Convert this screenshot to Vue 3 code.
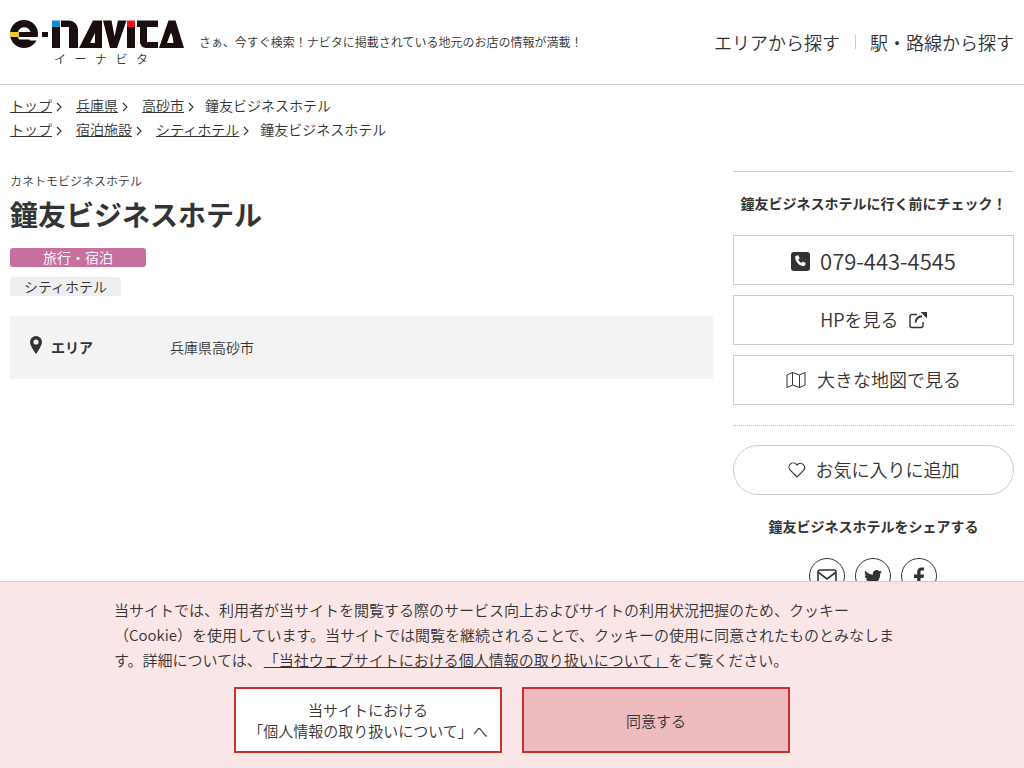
<script setup>
const crumbs = [
  { links: ['トップ', '兵庫県', '高砂市'], current: '鐘友ビジネスホテル' },
  { links: ['トップ', '宿泊施設', 'シティホテル'], current: '鐘友ビジネスホテル' }
]
</script>

<template>
  <div class="page">
    <header class="header">
      <div class="brand">
        <div class="logo">
          <svg class="logo-mark" width="176" height="30" viewBox="10 20 176 30">
            <g fill="#1a0d0d">
              <circle cx="24" cy="34" r="14"/>
              <rect x="42" y="32" width="6" height="5"/>
              <rect x="52" y="27" width="8" height="21"/>
              <path d="M61 20.500h8a9 9 0 0 1 9 9V48h-9V27h-8z"/>
              <path d="M79 48l14-27.500h9V48zM90 43h5V33z" fill-rule="evenodd"/>
              <path d="M103 20.500h8.500l3 16 3.500-16h8.500L117 48h-7z"/>
              <rect x="127" y="27" width="8" height="21"/>
              <path d="M137 20.500h21V27h-11v15h11v6h-12a6 6 0 0 1-6-6V27h-3z"/>
              <path d="M159 48l9.500-27.500h7L184 48zM167 43h6.500l-1-6.500-1.500-4z" fill-rule="evenodd"/>
            </g>
            <path d="M18 32a6.500 6.500 0 0 1 12.500 0z" fill="#fff"/>
            <path d="M18 37h21v3.500H30l-.5-1H19z" fill="#fff"/>
            <rect x="10" y="32" width="9" height="5" fill="#eec830"/>
            <rect x="52" y="20.500" width="8" height="6.500" fill="#0c90d0"/>
            <rect x="127" y="20.500" width="8" height="6.500" fill="#e8101f"/>
          </svg>
          <span class="logo-kana">イーナビタ</span>
        </div>
        <p class="tagline">さぁ、今すぐ検索！ナビタに掲載されている地元のお店の情報が満載！</p>
      </div>
      <nav class="gnav">
        <a class="gnav-item">エリアから探す</a>
        <span class="gnav-sep"></span>
        <a class="gnav-item">駅・路線から探す</a>
      </nav>
    </header>

    <div class="crumbs">
      <ol v-for="(row, i) in crumbs" :key="i" class="crumb-row">
        <li v-for="link in row.links" :key="link" class="crumb">
          <a class="crumb-link">{{ link }}</a>
          <svg class="chev" width="6" height="10" viewBox="0 0 6 10"><path d="M1 1l4 4-4 4" fill="none" stroke="#333" stroke-width="1.1"/></svg>
        </li>
        <li class="crumb-current">{{ row.current }}</li>
      </ol>
    </div>

    <div class="columns">
      <main class="main">
        <p class="kana">カネトモビジネスホテル</p>
        <h1 class="title">鐘友ビジネスホテル</h1>
        <div class="tag tag-cat">旅行・宿泊</div>
        <div class="tag tag-sub">シティホテル</div>
        <dl class="info">
          <dt class="info-label">
            <svg width="12" height="18" viewBox="0 0 12 18"><path d="M6 0a6 6 0 0 0-6 6c0 4 6 12 6 12s6-8 6-12a6 6 0 0 0-6-6zm0 8.600a2.600 2.600 0 1 1 0-5.200 2.600 2.600 0 0 1 0 5.200z" fill="#333" fill-rule="evenodd"/></svg>
            <span>エリア</span>
          </dt>
          <dd class="info-value">兵庫県高砂市</dd>
        </dl>
      </main>

      <aside class="side">
        <h2 class="side-head">鐘友ビジネスホテルに行く前にチェック！</h2>
        <a class="btn btn-tel">
          <svg width="19" height="19" viewBox="0 0 19 19"><rect width="19" height="19" rx="3" fill="#333"/><path d="M5 3.800l2.400-.6 1.300 3.200-1.500 1.200a8 8 0 0 0 3.200 3.400l1.300-1.500 3 1.400-.6 2.400c-.2.500-.6.800-1.200.8C8 14.100 4.100 9.500 4.200 5c0-.6.300-1 .8-1.200z" fill="#fff"/></svg>
          <span>079-443-4545</span>
        </a>
        <a class="btn btn-label">
          <span>HPを見る</span>
          <svg class="ico-ext" width="18" height="18" viewBox="0 0 18 18"><path d="M8 3.500H3A2 2 0 0 0 1 5.500v9a2 2 0 0 0 2 2h9a2 2 0 0 0 2-2V11" fill="none" stroke="#333" stroke-width="1.400"/><path d="M6.500 11.500C7 7.500 9.500 5.500 13 5.300" fill="none" stroke="#333" stroke-width="2"/><path d="M11.500 1H18v6.500z" fill="#333"/></svg>
        </a>
        <a class="btn btn-label btn-wide">
          <svg width="20" height="18" viewBox="0 0 20 18"><path d="M1 4l5.500-2.500L13.500 4 19 1.500V14l-5.500 2.500L6.500 14 1 16.500zM6.500 1.500V14M13.500 4v12.500" fill="none" stroke="#333" stroke-width="1" stroke-linejoin="round"/></svg>
          <span>大きな地図で見る</span>
        </a>
        <div class="dots"></div>
        <a class="btn btn-label btn-pill">
          <svg width="18" height="16" viewBox="0 0 18 16"><path d="M9 15L2.200 8.200a4.300 4.300 0 0 1 0-6 4.300 4.300 0 0 1 6 0l.8.800.8-.8a4.300 4.300 0 0 1 6 6z" fill="none" stroke="#333" stroke-width="1.100" stroke-linejoin="round"/></svg>
          <span>お気に入りに追加</span>
        </a>
        <h2 class="share-head">鐘友ビジネスホテルをシェアする</h2>
        <div class="share">
          <span class="circle">
            <svg width="20" height="16" viewBox="0 0 20 16"><rect x="1" y="1" width="18" height="14" rx="2" fill="none" stroke="#333" stroke-width="1.600"/><path d="M1.500 3.500L10 10l8.500-6.500" fill="none" stroke="#333" stroke-width="1.600"/></svg>
          </span>
          <span class="circle">
            <svg width="18" height="15" viewBox="0 0 24 20"><path d="M24 2.400c-.9.400-1.800.7-2.800.8 1-.6 1.800-1.600 2.200-2.700-1 .6-2 1-3.100 1.200A4.900 4.900 0 0 0 11.900 6.200C7.800 6 4.200 4 1.700.9c-1.300 2.200-.7 5.100 1.500 6.600-.8 0-1.600-.2-2.200-.6 0 2.300 1.600 4.500 4 5-.7.200-1.500.2-2.200.1.600 2 2.400 3.400 4.600 3.400A9.900 9.900 0 0 1 0 17.500 14 14 0 0 0 21.500 5c1-.7 1.900-1.600 2.500-2.600z" fill="#333"/></svg>
          </span>
          <span class="circle">
            <svg width="10" height="20" viewBox="0 0 10 20"><path d="M6.500 20v-9h3l.5-3.500H6.500V5.300c0-1 .3-1.700 1.800-1.700H10V.5C9.700.5 8.700.4 7.500.4 5 .4 3.200 2 3.200 4.900v2.600H0V11h3.200v9z" fill="#333"/></svg>
          </span>
        </div>
      </aside>
    </div>

    <section class="cookie">
      <p class="cookie-text">当サイトでは、利用者が当サイトを閲覧する際のサービス向上およびサイトの利用状況把握のため、クッキー（Cookie）を使用しています。当サイトでは閲覧を継続されることで、クッキーの使用に同意されたものとみなします。詳細については、<a class="cookie-link">「当社ウェブサイトにおける個人情報の取り扱いについて」</a>をご覧ください。</p>
      <div class="cookie-actions">
        <a class="cookie-btn">当サイトにおける<br>「個人情報の取り扱いについて」へ</a>
        <a class="cookie-btn cookie-agree">同意する</a>
      </div>
    </section>
  </div>
</template>

<style>
html, body { margin: 0; background: #fff; }
</style>

<style scoped>
.page {
  height: 768px;
  overflow: hidden;
  font-family: "Noto Sans CJK JP", "Noto Sans", sans-serif;
  font-weight: 350;
  color: #333;
  position: relative;
  text-spacing-trim: space-all;
}
.header {
  height: 84px;
  box-sizing: content-box;
  border-bottom: 1px solid #ccc;
  display: flex;
  align-items: flex-start;
  justify-content: space-between;
  padding: 0 10px;
}
.brand { display: flex; align-items: flex-start; }
.logo { display: flex; flex-direction: column; padding-top: 20px; width: 189px; }
.logo-mark { display: block; }
.logo-kana {
  font-size: 12px;
  line-height: 18px;
  letter-spacing: 8.500px;
  margin-left: 44px;
  white-space: nowrap;
}
.tagline { margin: 33px 0 0; font-size: 12px; line-height: 18px; }
.gnav { display: flex; align-items: center; height: 84px; font-size: 18px; }
.gnav-sep { width: 1px; height: 14px; background: #ccc; margin: 0 14px 0 15px; }

.crumbs { padding: 8px 10px 0; font-size: 14px; line-height: 24px; }
.crumb-row { display: flex; margin: 0; padding: 0; list-style: none; }
.crumb { display: flex; align-items: center; margin-right: 14px; }
.crumb-link { text-decoration: underline; }
.chev { margin: 4px 0 0 4px; }
.crumb:nth-last-child(2) { margin-right: 11px; }

.columns { display: flex; align-items: flex-start; gap: 20px; padding: 26px 10px 0; }
.main { width: 703px; }
.kana { margin: 0; padding-top: 5px; font-size: 12px; line-height: 18px; }
.title { margin: 0; padding-top: 3px; font-size: 28px; line-height: 42px; font-weight: 700; }
.tag {
  font-size: 14px;
  line-height: 19px;
  height: 19px;
  border-radius: 3px;
  text-align: center;
}
.tag-cat { width: 136px; margin-top: 13px; background: #c7709f; color: #fff; }
.tag-sub { width: 111px; margin-top: 10px; background: #eee; }
.info {
  display: flex;
  align-items: center;
  height: 63px;
  margin: 20px 0 0;
  padding-bottom: 2px;
  box-sizing: border-box;
  background: #f3f3f3;
  font-size: 14px;
  line-height: 20px;
}
.info-label {
  display: flex;
  align-items: center;
  gap: 9px;
  width: 140px;
  padding-left: 20px;
  box-sizing: border-box;
  font-weight: 700;
}
.info-label svg { margin-top: -3px; }
.info-value { margin: 0 0 0 20px; }

.side { width: 281px; margin-top: 4px; border-top: 1px solid #ccc; }
.side-head {
  margin: 0;
  padding-top: 21px;
  font-size: 14px;
  line-height: 21px;
  font-weight: 700;
  text-align: center;
}
.btn {
  display: flex;
  align-items: center;
  justify-content: center;
  height: 50px;
  box-sizing: border-box;
  border: 1px solid #ccc;
  margin-top: 10px;
  gap: 10px;
  font-size: 18px;
  background: #fff;
}
.btn svg { margin-top: 2px; }
.btn-label { padding-bottom: 2px; }
.btn-wide { gap: 11px; }
.btn-tel { margin-top: 21px; font-size: 22px; }
.dots { border-top: 1px dotted #bbb; margin-top: 20px; }
.btn-pill { border-radius: 25px; margin-top: 19px; }
.share-head {
  margin: 0;
  padding-top: 21px;
  font-size: 14px;
  line-height: 21px;
  font-weight: 700;
  text-align: center;
}
.share { display: flex; justify-content: center; gap: 10px; margin: 21px 1px 0 0; }
.circle {
  display: flex;
  align-items: center;
  justify-content: center;
  width: 36px;
  height: 36px;
  box-sizing: border-box;
  border: 1px solid #333;
  border-radius: 50%;
}
.circle svg { margin-top: 2px; }

.cookie {
  position: absolute;
  left: 0;
  right: 0;
  bottom: 0;
  height: 187px;
  box-sizing: border-box;
  border-top: 1px solid #d9c9c9;
  background: #fae6e6;
  padding-top: 15px;
}
.cookie-text {
  width: 790px;
  margin: 0 0 0 114px;
  font-size: 15px;
  line-height: 25px;
}
.cookie-link { margin-left: 2px; text-decoration: underline; }
.cookie-actions { display: flex; justify-content: center; gap: 20px; margin-top: 15px; }
.cookie-btn {
  display: flex;
  align-items: center;
  justify-content: center;
  text-align: center;
  width: 268px;
  height: 66px;
  box-sizing: border-box;
  border: 2px solid #c8302f;
  background: #fff;
  font-size: 15px;
  line-height: 21px;
}
.cookie-agree { background: #eebcbe; }
</style>
